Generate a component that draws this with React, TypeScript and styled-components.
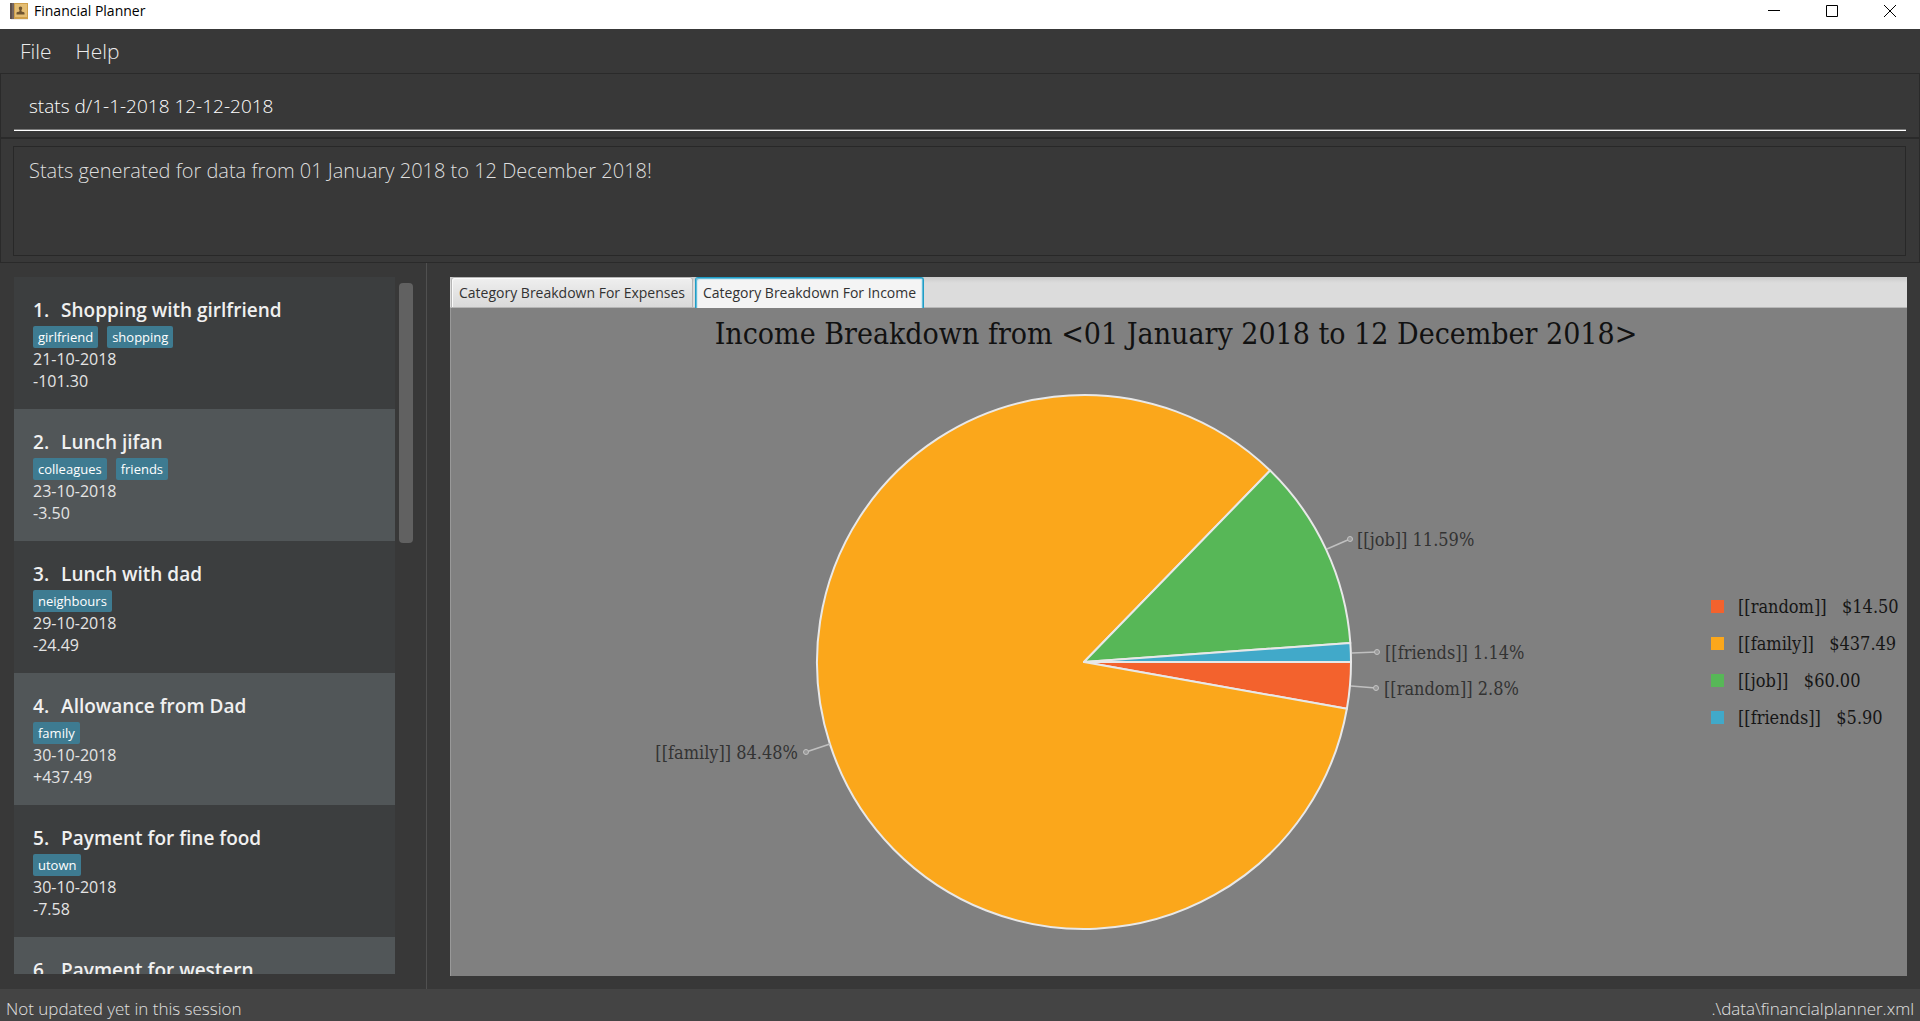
import React, { useState } from 'react';
import styled, { createGlobalStyle } from 'styled-components';

const sans = '"Open Sans", "Noto Sans", sans-serif';
const serif = '"DejaVu Serif Condensed", "DejaVu Serif", serif';

const GlobalStyle = createGlobalStyle`
  *, *::before, *::after { box-sizing: border-box; }
  body { margin: 0; background: #383838; font-family: ${sans}; }
  button, input, textarea { font: inherit; color: inherit; border-radius: 0; }
  h1, h2, p, ul, ol { margin: 0; padding: 0; font-weight: inherit; }
  ul, ol { list-style: none; }
`;

const Window = styled.div`
  display: flex;
  flex-direction: column;
  height: 100vh;
  background: #383838;
`;

const TitleBar = styled.header`
  display: flex;
  align-items: center;
  height: 29px;
  padding: 0 1px 8px 10px;
  background: #fff;
  color: #000;
`;

const AppTitle = styled.h1`
  flex: 1;
  padding-left: 6px;
  font-size: 14px;
  line-height: 20px;
`;

const WindowButton = styled.button`
  display: flex;
  align-items: center;
  justify-content: center;
  width: 58px;
  height: 20px;
  margin: 0;
  padding: 0;
  border: 0;
  background: none;
`;

const MenuBar = styled.nav`
  display: flex;
  align-items: center;
  gap: 24px;
  height: 44px;
  padding: 0 20px;
`;

const MenuButton = styled.button`
  padding: 0;
  border: 0;
  background: none;
  color: #ececec;
  font-size: 21px;
  font-weight: 300;
  line-height: 28px;
`;

const CommandPane = styled.form`
  padding: 9px 13px 6px;
  border: 1px solid #2a2a2a;
`;

const CommandInput = styled.input`
  display: block;
  width: 100%;
  height: 48px;
  padding: 0 15px 2px;
  border: 0;
  border-bottom: 1px solid #fff;
  box-shadow: inset 0 -1px #7a7a7a;
  outline: 0;
  background: transparent;
  color: #fff;
  font-size: 19px;
  font-weight: 300;
`;

const ResultPane = styled.section`
  padding: 7px 13px 6px 12px;
  border: 1px solid #2a2a2a;
`;

const ResultText = styled.textarea`
  display: block;
  width: 100%;
  height: 110px;
  padding: 10px 15px;
  border: 1px solid #282828;
  outline: 0;
  resize: none;
  background: transparent;
  color: #dedede;
  font-size: 20px;
  font-weight: 300;
  line-height: 28px;
`;

const Split = styled.main`
  display: flex;
  flex: 1;
  min-height: 0;
`;

const ListPane = styled.section`
  display: flex;
  gap: 4px;
  flex: 0 0 427px;
  padding: 14px 13px 15px 14px;
  border-right: 1px solid #505050;
`;

const RecordList = styled.ol`
  flex: 1;
  overflow: hidden;
`;

const ScrollTrack = styled.div`
  width: 14px;
  padding: 6px 0;
`;

const ScrollThumb = styled.div`
  height: 38%;
  border-radius: 4px;
  background: #616161;
`;

const Card = styled.li<{ $striped: boolean }>`
  height: 132px;
  padding: 19px;
  background: ${p => (p.$striped ? '#515658' : '#3c3e3f')};
  color: #e4e4e4;
  font-size: 16px;
  line-height: 22px;
`;

const RecordName = styled.h2`
  display: flex;
  gap: 12px;
  margin-bottom: 2px;
  color: #f0f0f0;
  font-size: 19px;
  font-weight: 600;
  line-height: 28px;
`;

const Tags = styled.ul`
  display: flex;
  gap: 9px;
`;

const Tag = styled.li`
  padding: 0 5px;
  border-radius: 2px;
  background: #3e7b91;
  color: #fff;
  font-size: 13px;
  line-height: 22px;
`;

const TabPane = styled.section`
  display: flex;
  flex-direction: column;
  flex: 1;
  min-width: 0;
  margin: 14px 13px 13px 23px;
`;

const TabHeader = styled.div`
  display: flex;
  gap: 2px;
  height: 31px;
  padding-left: 1px;
  background: linear-gradient(#cbcbcb, #dcdcdc 6px);
  box-shadow: inset 0 -1px #b8b8b8;
`;

const Tab = styled.button<{ $active: boolean }>`
  padding: 0 7px;
  border: 1px solid ${p => (p.$active ? '#1f9dc6' : '#b5b5b5')};
  border-width: ${p => (p.$active ? '1px 1px 0' : '1px')};
  border-radius: 3px 3px 0 0;
  background: ${p => (p.$active ? '#f4f4f4' : 'linear-gradient(#efefef, #d9d9d9)')};
  box-shadow: ${p => (p.$active ? 'inset 1px 1px #63bbd8, inset -1px 0 #63bbd8, inset 2px 2px #d5ebf3, inset -2px 0 #d5ebf3' : 'inset 1px 1px #fafafa')};
  color: #323232;
  font-size: 14px;
  line-height: 20px;
`;

const Chart = styled.div`
  display: flex;
  flex-direction: column;
  flex: 1;
  min-height: 0;
  padding: 0 6px 12px 0;
  border-left: 1px solid #999;
  background: #808080;
  font-family: ${serif};
`;

const ChartTitle = styled.h2`
  color: #111;
  font-size: 30px;
  line-height: 52px;
  text-align: center;
`;

const ChartBody = styled.div`
  display: flex;
  align-items: center;
  gap: 10px;
  flex: 1;
  min-height: 0;
`;

const Pie = styled.svg`
  flex: 1;
  min-width: 0;
  height: 100%;
`;

const PieLabel = styled.text`
  fill: #333;
  font-size: 18px;
`;

const Legend = styled.ul`
  display: flex;
  flex-direction: column;
  gap: 9px;
  flex: 0 0 190px;
`;

const LegendItem = styled.li`
  display: flex;
  align-items: center;
  gap: 14px;
  color: #161616;
  font-size: 18px;
  line-height: 28px;
  white-space: pre;
`;

const Swatch = styled.span<{ $color: string }>`
  width: 13px;
  height: 13px;
  background: ${p => p.$color};
`;

const StatusBar = styled.footer`
  display: flex;
  justify-content: space-between;
  height: 32px;
  padding: 8px 6px 0;
  background: #444;
  color: #e0e0e0;
  font-size: 17px;
  font-weight: 300;
  line-height: 24px;
`;

const records = [
  { name: 'Shopping with girlfriend', tags: ['girlfriend', 'shopping'], date: '21-10-2018', amount: '-101.30' },
  { name: 'Lunch jifan', tags: ['colleagues', 'friends'], date: '23-10-2018', amount: '-3.50' },
  { name: 'Lunch with dad', tags: ['neighbours'], date: '29-10-2018', amount: '-24.49' },
  { name: 'Allowance from Dad', tags: ['family'], date: '30-10-2018', amount: '+437.49' },
  { name: 'Payment for fine food', tags: ['utown'], date: '30-10-2018', amount: '-7.58' },
  { name: 'Payment for western', tags: [], date: '', amount: '' },
];

type Point = [number, number];
interface Slice {
  name: string;
  value: number;
  color: string;
  percent: string;
  edge: Point;
  dot: Point;
  label: Point;
  anchor: 'start' | 'end';
}

const slices: Slice[] = [
  { name: '[[random]]', value: 14.5, color: '#f3622d', percent: '2.8%', edge: [267, 24], dot: [292, 26], label: [300, 33], anchor: 'start' },
  { name: '[[family]]', value: 437.49, color: '#fba71b', percent: '84.48%', edge: [-254, 82], dot: [-278, 90], label: [-286, 97], anchor: 'end' },
  { name: '[[job]]', value: 60, color: '#57b757', percent: '11.59%', edge: [243, -113], dot: [266, -123], label: [273, -116], anchor: 'start' },
  { name: '[[friends]]', value: 5.9, color: '#41a9c9', percent: '1.14%', edge: [268, -9], dot: [293, -10], label: [301, -3], anchor: 'start' },
];

const RADIUS = 267;
const total = slices.reduce((sum, s) => sum + s.value, 0);

function slicePath(index: number) {
  const before = slices.slice(0, index).reduce((sum, s) => sum + s.value, 0);
  const from = (before / total) * Math.PI * 2;
  const to = ((before + slices[index].value) / total) * Math.PI * 2;
  const at = (a: number) => `${RADIUS * Math.cos(a)} ${RADIUS * Math.sin(a)}`;
  return `M0 0L${at(from)}A${RADIUS} ${RADIUS} 0 ${to - from > Math.PI ? 1 : 0} 1 ${at(to)}Z`;
}

function BookIcon() {
  return (
    <svg width="18" height="18" viewBox="0 0 18 18" aria-hidden="true">
      <path d="M1 16.500h17v1H1z" fill="#d9d4d0" />
      <path d="M0 1h4v16H0z" fill="#5d4f4b" />
      <path d="M2.500 1h1v16h-1z" fill="#8d7f78" />
      <path d="M4 1h14v16H4z" fill="#cf9f4a" />
      <path d="M5 2h12v13H5z" fill="#e4bd73" />
      <path d="M10.500 4.500c1.200 0 1.700.8 1.700 1.800 0 1.100-.8 1.600-.8 2.700 0 .9 3.100.8 3.100 2v1.500h-8V11c0-1.200 3.100-1.100 3.100-2 0-1.100-.8-1.600-.8-2.700 0-1 .5-1.800 1.700-1.800z" fill="#6f5431" />
    </svg>
  );
}

export default function App() {
  const [command, setCommand] = useState('stats d/1-1-2018 12-12-2018');
  return (
    <Window>
      <GlobalStyle />
      <TitleBar>
        <BookIcon />
        <AppTitle>Financial Planner</AppTitle>
        <WindowButton aria-label="Minimize">
          <svg width="12" height="12" viewBox="0 0 12 12"><path d="M0 5.500h12" stroke="#000" /></svg>
        </WindowButton>
        <WindowButton aria-label="Maximize">
          <svg width="12" height="12" viewBox="0 0 12 12"><path d="M.5.500h11v11H.5z" fill="none" stroke="#000" /></svg>
        </WindowButton>
        <WindowButton aria-label="Close">
          <svg width="12" height="12" viewBox="0 0 12 12"><path d="M0 0l12 12M12 0L0 12" stroke="#000" /></svg>
        </WindowButton>
      </TitleBar>

      <MenuBar>
        <MenuButton>File</MenuButton>
        <MenuButton>Help</MenuButton>
      </MenuBar>

      <CommandPane onSubmit={e => e.preventDefault()}>
        <CommandInput aria-label="Command" value={command} onChange={e => setCommand(e.target.value)} />
      </CommandPane>
      <ResultPane>
        <ResultText
          aria-label="Result"
          readOnly
          value="Stats generated for data from 01 January 2018 to 12 December 2018!"
        />
      </ResultPane>

      <Split>
        <ListPane>
          <RecordList>
            {records.map((r, i) => (
              <Card key={r.name} $striped={i % 2 === 1}>
                <RecordName><span>{i + 1}.</span><span>{r.name}</span></RecordName>
                <Tags>{r.tags.map(t => <Tag key={t}>{t}</Tag>)}</Tags>
                <p>{r.date}</p>
                <p>{r.amount}</p>
              </Card>
            ))}
          </RecordList>
          <ScrollTrack><ScrollThumb /></ScrollTrack>
        </ListPane>

        <TabPane>
          <TabHeader role="tablist">
            <Tab role="tab" $active={false} aria-selected={false}>Category Breakdown For Expenses</Tab>
            <Tab role="tab" $active aria-selected>Category Breakdown For Income</Tab>
          </TabHeader>
          <Chart role="tabpanel">
            <ChartTitle>{'Income Breakdown from <01 January 2018 to 12 December 2018>'}</ChartTitle>
            <ChartBody>
              <Pie viewBox="-633 -302 1250 604">
                {slices.map((s, i) => (
                  <path key={s.name} d={slicePath(i)} fill={s.color} stroke="#e8e8e8" strokeWidth="2" strokeLinejoin="round" />
                ))}
                {slices.map(s => (
                  <g key={s.name}>
                    <path d={`M${s.edge.join(' ')}L${s.dot.join(' ')}`} stroke="#c0c0c0" strokeWidth="1.500" />
                    <circle cx={s.dot[0]} cy={s.dot[1]} r="2.500" fill="#999" stroke="#c4c4c4" />
                    <PieLabel x={s.label[0]} y={s.label[1]} textAnchor={s.anchor}>{`${s.name} ${s.percent}`}</PieLabel>
                  </g>
                ))}
              </Pie>
              <Legend>
                {slices.map(s => (
                  <LegendItem key={s.name}>
                    <Swatch $color={s.color} />
                    <span>{`${s.name}   $${s.value.toFixed(2)}`}</span>
                  </LegendItem>
                ))}
              </Legend>
            </ChartBody>
          </Chart>
        </TabPane>
      </Split>

      <StatusBar>
        <span>Not updated yet in this session</span>
        <span>{'.\\data\\financialplanner.xml'}</span>
      </StatusBar>
    </Window>
  );
}
